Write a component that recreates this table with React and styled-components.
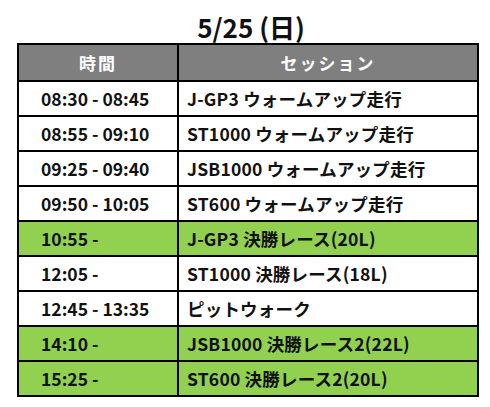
import React from "react";
import styled, { createGlobalStyle } from "styled-components";

const GlobalStyle = createGlobalStyle`
  body {
    margin: 0;
    background: #fff;
    font-family: "Noto Sans CJK JP", "Noto Sans", sans-serif;
  }
`;

const Page = styled.div`
  width: 490px;
  height: 407px;
  padding: 0 11px 0 17px;
  box-sizing: border-box;
  display: flex;
  flex-direction: column;
`;

const Title = styled.h1`
  margin: 0;
  height: 43px;
  display: flex;
  align-items: center;
  justify-content: center;
  padding-top: 10px;
  padding-left: 6px;
  box-sizing: border-box;
  font-size: 26px;
  font-weight: 700;
  color: #111;
`;

const Table = styled.table`
  width: 462px;
  border-collapse: collapse;
  table-layout: fixed;
`;

const Head = styled.th`
  height: 35px;
  padding: 0;
  background: #7f7f7f;
  color: #fff;
  font-size: 17px;
  font-weight: 700;
  border: 2px solid #000;
  letter-spacing: 2px;
`;

const Cell = styled.td`
  height: 35px;
  padding: 0 0 0 ${(p) => (p.time ? "22px" : "8px")};
  box-sizing: border-box;
  background: ${(p) => (p.final ? "#92d050" : "#fff")};
  color: #111;
  font-size: 17.5px;
  font-weight: 700;
  letter-spacing: ${(p) => (p.time ? "0" : "0.2px")};
  border: 2px solid #000;
  white-space: nowrap;
`;

const rows = [
  ["08:30 - 08:45", "J-GP3 ウォームアップ走行"],
  ["08:55 - 09:10", "ST1000 ウォームアップ走行"],
  ["09:25 - 09:40", "JSB1000 ウォームアップ走行"],
  ["09:50 - 10:05", "ST600 ウォームアップ走行"],
  ["10:55 -", "J-GP3 決勝レース(20L)", true],
  ["12:05 -", "ST1000 決勝レース(18L)"],
  ["12:45 - 13:35", "ピットウォーク"],
  ["14:10 -", "JSB1000 決勝レース2(22L)", true],
  ["15:25 -", "ST600 決勝レース2(20L)", true],
];

export default function App() {
  return (
    <Page>
      <GlobalStyle />
      <Title>5/25 (日)</Title>
      <Table>
        <colgroup>
          <col style={{ width: 160 }} />
          <col />
        </colgroup>
        <thead>
          <tr>
            <Head>時間</Head>
            <Head>セッション</Head>
          </tr>
        </thead>
        <tbody>
          {rows.map(([time, session, final]) => (
            <tr key={time}>
              <Cell time final={final}>{time}</Cell>
              <Cell final={final}>{session}</Cell>
            </tr>
          ))}
        </tbody>
      </Table>
    </Page>
  );
}
